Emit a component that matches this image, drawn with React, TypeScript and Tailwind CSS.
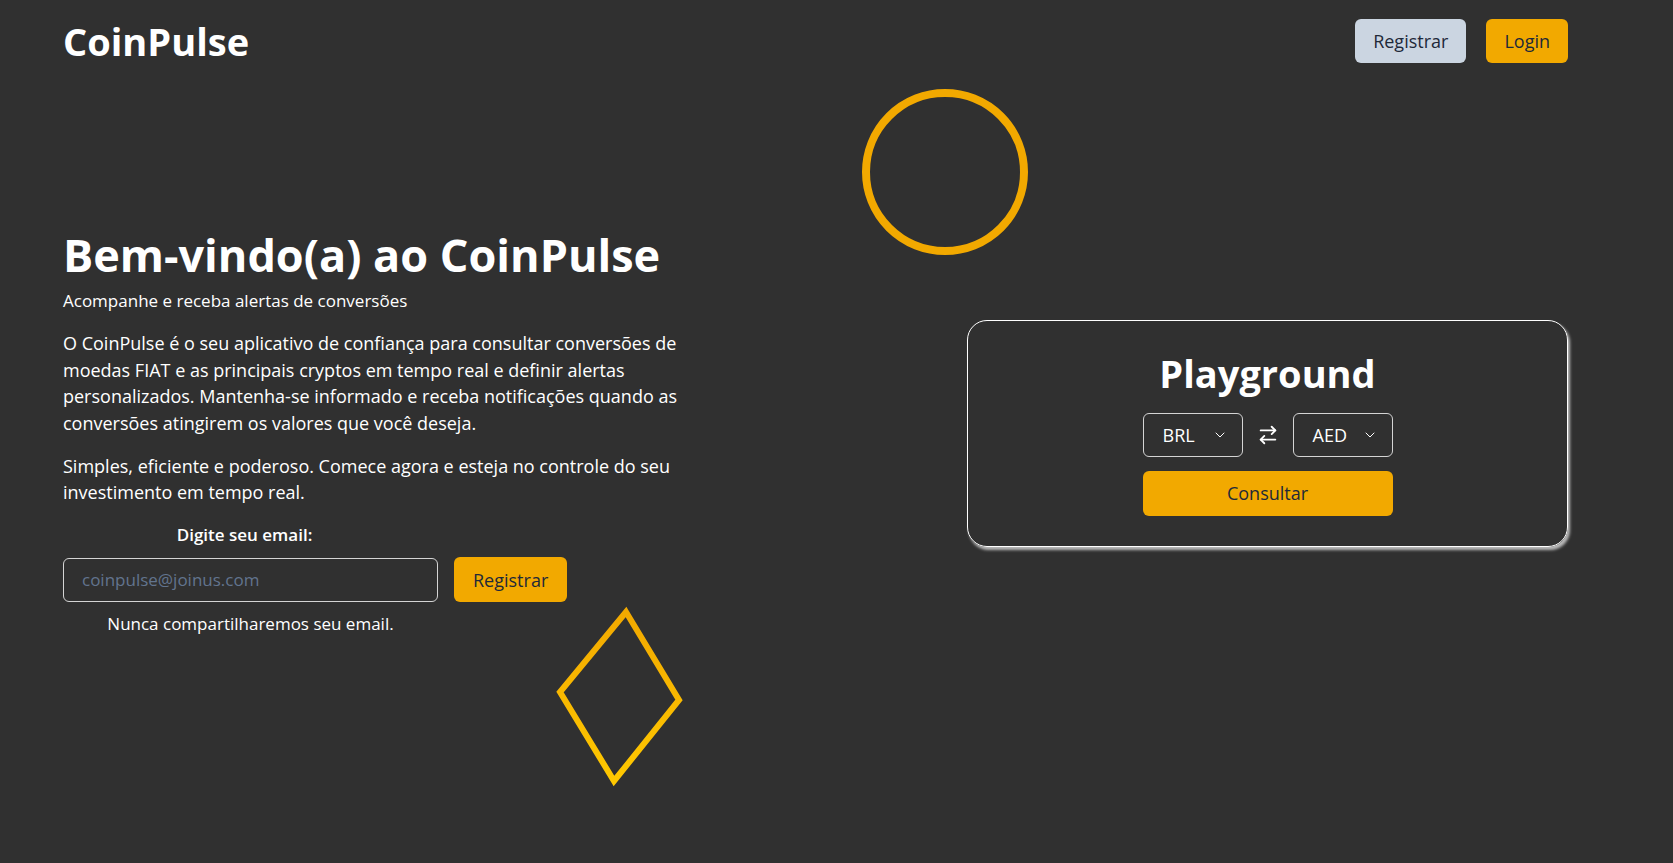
import { ArrowRightLeft, ChevronDown } from "lucide-react";

const currencies = ["BRL", "AED"];

function CurrencySelect({ value }: { value: string }) {
  return (
    <div className="flex h-11 w-[100px] items-center justify-between rounded-md border border-[#d4d4d4] pl-[19px] pr-[14px] text-lg text-white">
      <span>{value}</span>
      <ChevronDown size={16} strokeWidth={1.5} />
    </div>
  );
}

export default function App() {
  return (
    <div className="relative min-h-screen overflow-hidden bg-[#303030] font-['Open_Sans',sans-serif] text-white">
      {/* Navbar */}
      <header className="flex items-center justify-between pl-[63px] pr-[105px] pt-[19px]">
        <h1 className="text-[38px] font-bold leading-10">CoinPulse</h1>
        <div className="flex items-center gap-5">
          <button className="h-11 rounded-md bg-[#cbd5e1] px-[18px] text-lg text-gray-800">
            Registrar
          </button>
          <button className="h-11 rounded-md bg-[#f2a900] px-[18px] text-lg text-gray-800">
            Login
          </button>
        </div>
      </header>

      {/* Formas decorativas */}
      <div className="absolute left-[862px] top-[89px] h-[166px] w-[166px] rounded-full border-8 border-[#f2a900]" />
      <svg
        className="absolute left-[550px] top-[600px]"
        width="140"
        height="190"
        viewBox="0 0 140 190"
      >
        <defs>
          <linearGradient id="diamond" x1="0" y1="0" x2="0" y2="1">
            <stop offset="0%" stopColor="#f2a900" />
            <stop offset="100%" stopColor="#ffc800" />
          </linearGradient>
        </defs>
        <polygon
          points="76,12 129,100 64,181 10,92"
          fill="none"
          stroke="url(#diamond)"
          strokeWidth="6"
        />
      </svg>

      <main className="relative flex h-[740px] items-center justify-between pl-[63px] pr-[105px]">
        {/* Hero */}
        <div className="w-[640px] pt-[3px]">
          <h2 className="text-[45px] font-bold leading-none">
            Bem-vindo(a) ao CoinPulse
          </h2>
          <p className="mb-4 mt-[11px] text-[17px] leading-[26px]">
            Acompanhe e receba alertas de conversões
          </p>
          <p className="mb-4 w-[620px] text-lg leading-[26.7px]">
            O CoinPulse é o seu aplicativo de confiança para consultar
            conversões de moedas FIAT e as principais cryptos em tempo real e
            definir alertas personalizados. Mantenha-se informado e receba
            notificações quando as conversões atingirem os valores que você
            deseja.
          </p>
          <p className="mb-4 w-[620px] text-lg leading-[26.7px]">
            Simples, eficiente e poderoso. Comece agora e esteja no controle do
            seu investimento em tempo real.
          </p>

          <form onSubmit={(e) => e.preventDefault()}>
            <label
              htmlFor="email"
              className="mb-[9px] block w-[375px] pr-3 text-center text-[17px] font-semibold leading-[26px]"
            >
              Digite seu email:
            </label>
            <div className="flex items-center gap-4">
              <input
                id="email"
                type="email"
                placeholder="coinpulse@joinus.com"
                className="h-11 w-[375px] rounded-md border border-[#d4d4d4] bg-transparent pl-[18px] text-[17px] text-white placeholder:text-slate-500 outline-none"
              />
              <button className="h-[45px] rounded-md bg-[#f2a900] px-[19px] text-lg text-gray-800">
                Registrar
              </button>
            </div>
            <p className="mt-[9px] w-[375px] text-center text-[17px] leading-[26px]">
              Nunca compartilharemos seu email.
            </p>
          </form>
        </div>

        {/* Playground */}
        <div className="flex w-[601px] flex-col items-center rounded-[20px] border border-white pb-[30px] pt-[32px] shadow-[2px_3px_3px_rgba(210,210,210,0.85)]">
          <h3 className="mb-5 text-[38px] font-bold leading-10">Playground</h3>
          <div className="mb-[14px] flex items-center gap-[14px]">
            <CurrencySelect value={currencies[0]} />
            <ArrowRightLeft size={22} strokeWidth={2} />
            <CurrencySelect value={currencies[1]} />
          </div>
          <button className="h-[45px] w-[250px] rounded-md bg-[#f2a900] text-lg text-gray-800">
            Consultar
          </button>
        </div>
      </main>
    </div>
  );
}
